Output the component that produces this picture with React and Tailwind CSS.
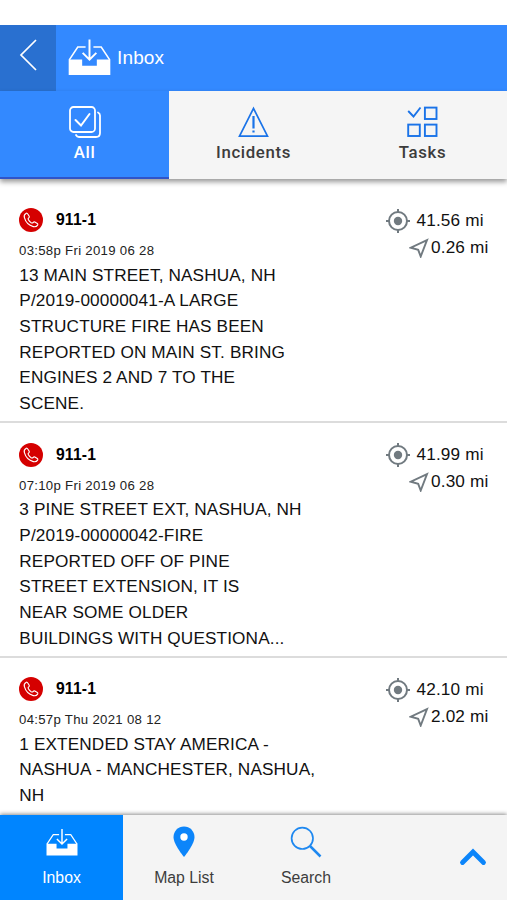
import { useState } from 'react';

const messages = [
  {
    id: 1,
    source: '911-1',
    date: '03:58p Fri 2019 06 28',
    lines: [
      '13 MAIN STREET, NASHUA, NH',
      'P/2019-00000041-A LARGE',
      'STRUCTURE FIRE HAS BEEN',
      'REPORTED ON MAIN ST. BRING',
      'ENGINES 2 AND 7 TO THE',
      'SCENE.',
    ],
    fromStation: '41.56 mi',
    fromMe: '0.26 mi',
  },
  {
    id: 2,
    source: '911-1',
    date: '07:10p Fri 2019 06 28',
    lines: [
      '3 PINE STREET EXT, NASHUA, NH',
      'P/2019-00000042-FIRE',
      'REPORTED OFF OF PINE',
      'STREET EXTENSION, IT IS',
      'NEAR SOME OLDER',
      'BUILDINGS WITH QUESTIONA...',
    ],
    fromStation: '41.99 mi',
    fromMe: '0.30 mi',
  },
  {
    id: 3,
    source: '911-1',
    date: '04:57p Thu 2021 08 12',
    lines: ['1 EXTENDED STAY AMERICA -', 'NASHUA - MANCHESTER, NASHUA,', 'NH'],
    fromStation: '42.10 mi',
    fromMe: '2.02 mi',
  },
];

function InboxIcon({ className }) {
  return (
    <svg viewBox="0 0 44 38" className={className} fill="none" stroke="currentColor">
      <path d="M18 8.800H10L1.300 22M26 8.800h8l8.700 13.200" strokeWidth="1.600" />
      <path d="M.700 21.500H14.500V28H29.500V21.500H43.300V37.500H.700z" fill="currentColor" stroke="none" />
      <path d="M22 1v20.500M15 14.800l7 7 7-7" strokeWidth="2" />
    </svg>
  );
}

function AllIcon() {
  return (
    <svg viewBox="0 0 32 32" className="h-8 w-8" fill="none" stroke="currentColor" strokeWidth="1.8" strokeLinecap="round">
      <rect x="1" y="1" width="25" height="25" rx="3.5" />
      <path d="M29 6.500q2 1 2 3V27q0 4-4 4H10q-2 0-3-2" />
      <path d="M6.500 14l5.500 5.500L20.500 8" strokeWidth="2" />
    </svg>
  );
}

function IncidentsIcon() {
  return (
    <svg viewBox="0 0 32 32" className="h-8 w-8" fill="none" stroke="#1a73e8" strokeWidth="1.7">
      <path d="M15.500 2.400L29.500 30.200H1.500z" />
      <path d="M15.500 10v12.500M15.500 24.500v2" strokeWidth="2.200" />
    </svg>
  );
}

function TasksIcon() {
  return (
    <svg viewBox="0 0 32 32" className="h-8 w-8" fill="none" stroke="#1a73e8" strokeWidth="1.9">
      <path d="M1.200 5l5.300 5.500L13.500 1.500" />
      <rect x="17.900" y="1.600" width="11.600" height="11.400" />
      <rect x="1.200" y="18.600" width="11.600" height="11.400" />
      <rect x="17.900" y="18.600" width="11.600" height="11.400" />
    </svg>
  );
}

function PhoneIcon() {
  return (
    <svg viewBox="0 0 24 24" className="h-6 w-6">
      <circle cx="12" cy="12" r="12" fill="#d50000" />
      <path
        d="M6.900 5.500C5.300 6.500 4.900 8 5.400 9.700c1.300 4.600 4.400 7.700 8.900 8.900 1.900.5 3.300 0 4.300-1.500.4-.7.300-1.200-.3-1.600l-2.500-1.500c-.6-.3-1.100-.2-1.500.3-.6.800-1.300.9-2.100.4-1.200-.8-2.100-1.700-2.800-2.900-.5-.8-.4-1.500.4-2 .6-.4.700-.9.400-1.500L8.600 5.800c-.4-.7-1-.8-1.700-.3z"
        fill="none"
        stroke="#fff"
        strokeWidth="1.150"
        strokeLinejoin="round"
      />
    </svg>
  );
}

function TargetIcon() {
  return (
    <svg viewBox="0 0 24 24" className="h-6 w-6" fill="none" stroke="#717a80" strokeWidth="2">
      <circle cx="12" cy="12" r="9" />
      <circle cx="12" cy="12" r="4.200" fill="#717a80" stroke="none" />
      <path d="M12 0v3.500M12 20.500v3.500M0 12h3.500M20.500 12h3.500" />
    </svg>
  );
}

function ArrowIcon() {
  return (
    <svg viewBox="0 0 20 20" className="h-5 w-5" fill="none" stroke="#717a80" strokeWidth="1.9">
      <path d="M18 2.200L1.800 9.700l7.400 2.100 2.500 6.700z" />
    </svg>
  );
}

function MessageRow({ message }) {
  return (
    <div className="flex h-[234.6px] shrink-0 border-b-2 border-[#dcdcdc] pl-[19px] pt-[19.5px]">
      <div className="w-[364px]">
        <div className="flex h-6 items-center gap-[13px]">
          <PhoneIcon />
          <span className="text-[15.7px] font-bold tracking-[0.15px] text-black">{message.source}</span>
        </div>
        <div className="h-[30.6px] pt-[9px] text-[13.2px] leading-5 tracking-[0.3px] text-[#222]">{message.date}</div>
        <div className="whitespace-nowrap pl-[0.3px] text-[17.2px] leading-[25.7px] tracking-[0.13px] text-[#111]">
          {message.lines.map((line) => (
            <div key={line}>{line}</div>
          ))}
        </div>
      </div>
      <div className="flex flex-col whitespace-nowrap pl-[3px] text-[17.2px] tracking-[0.15px] text-[#111]">
        <div className="flex h-[25px] items-center gap-[6.5px]">
          <TargetIcon />
          <span>{message.fromStation}</span>
        </div>
        <div className="flex h-[29px] items-center gap-[2px] pl-[23px]">
          <ArrowIcon />
          <span>{message.fromMe}</span>
        </div>
      </div>
    </div>
  );
}

const tabs = [
  { id: 'all', label: 'All', icon: AllIcon },
  { id: 'incidents', label: 'Incidents', icon: IncidentsIcon },
  { id: 'tasks', label: 'Tasks', icon: TasksIcon },
];

export default function App() {
  const [tab, setTab] = useState('all');

  return (
    <div className="flex h-[900px] w-[507px] flex-col overflow-hidden bg-white pt-[25px] font-['Liberation_Sans',Arial,sans-serif]">
      {/* Header */}
      <header className="flex h-[66px] shrink-0 bg-[#3389ff] text-white">
        <button className="flex w-14 items-center justify-center bg-[#2970d0]">
          <svg viewBox="0 0 18 32" className="mb-[6px] h-8 w-[18px]" fill="none" stroke="currentColor" strokeWidth="1.7">
            <path d="M17 1L2 16l15 15" />
          </svg>
        </button>
        <div className="flex items-center pl-3">
          <InboxIcon className="mb-[3px] h-[38px] w-[43px]" />
          <span className="pl-[6px] pt-px text-[19px] tracking-[0.15px]">Inbox</span>
        </div>
      </header>

      {/* Tabs */}
      <div className="z-10 grid h-[88px] shrink-0 grid-cols-3 bg-[#f5f5f5] font-['Roboto',sans-serif] shadow-[0_3px_5px_rgba(0,0,0,0.4)]">
        {tabs.map(({ id, label, icon: Icon }) => (
          <button
            key={id}
            onClick={() => setTab(id)}
            className={
              tab === id
                ? 'flex flex-col items-center border-b-2 border-[#3054c8] bg-[#3389ff] pt-[15px] text-white'
                : 'flex flex-col items-center pt-[15px] text-[#3c3c3c]'
            }
          >
            <Icon />
            <span className="pt-[4px] text-[16.8px] font-medium leading-5 tracking-[0.65px]">{label}</span>
          </button>
        ))}
      </div>

      {/* Message list */}
      <main className="flex min-h-0 flex-1 flex-col overflow-hidden pt-[9.5px]">
        {messages.map((message) => (
          <MessageRow key={message.id} message={message} />
        ))}
      </main>

      {/* Bottom navigation */}
      <nav className="z-10 flex h-[85px] shrink-0 bg-[#f4f4f4] text-[15.8px] text-[#3c3c3c] shadow-[0_-1px_4px_rgba(0,0,0,0.45)]">
        <button className="flex w-[123px] flex-col items-center bg-[#0085ff] pt-[13px] text-white">
          <InboxIcon className="h-[28px] w-8" />
          <span className="pt-[12px] leading-5">Inbox</span>
        </button>
        <button className="flex w-[122px] flex-col items-center pt-[11px]">
          <svg viewBox="0 0 22 32" className="h-8 w-[22px]">
            <path
              d="M11 .5C5.200.5.500 5.200.500 11 .500 18.500 11 31 11 31s10.500-12.500 10.500-20C21.500 5.200 16.800.500 11 .500z"
              fill="#0c85fa"
            />
            <circle cx="11" cy="11" r="3.700" fill="#fff" />
          </svg>
          <span className="pt-[10px] leading-5">Map List</span>
        </button>
        <button className="flex w-[122px] flex-col items-center pt-[11px]">
          <svg viewBox="0 0 32 32" className="h-8 w-8" fill="none" stroke="#1e88f0">
            <circle cx="12.300" cy="12.300" r="10.700" strokeWidth="1.700" />
            <path d="M20 20l10.500 10.500" strokeWidth="2.500" />
          </svg>
          <span className="pt-[10px] leading-5">Search</span>
        </button>
        <button className="flex flex-1 items-center justify-end pb-[2px] pr-[20px]">
          <svg viewBox="0 0 28 18" className="h-[18px] w-7" fill="none" stroke="#0c85fa" strokeWidth="4.800" strokeLinecap="round">
            <path d="M3.500 14.500l10.500-10.500 10.500 10.500" />
          </svg>
        </button>
      </nav>
    </div>
  );
}
